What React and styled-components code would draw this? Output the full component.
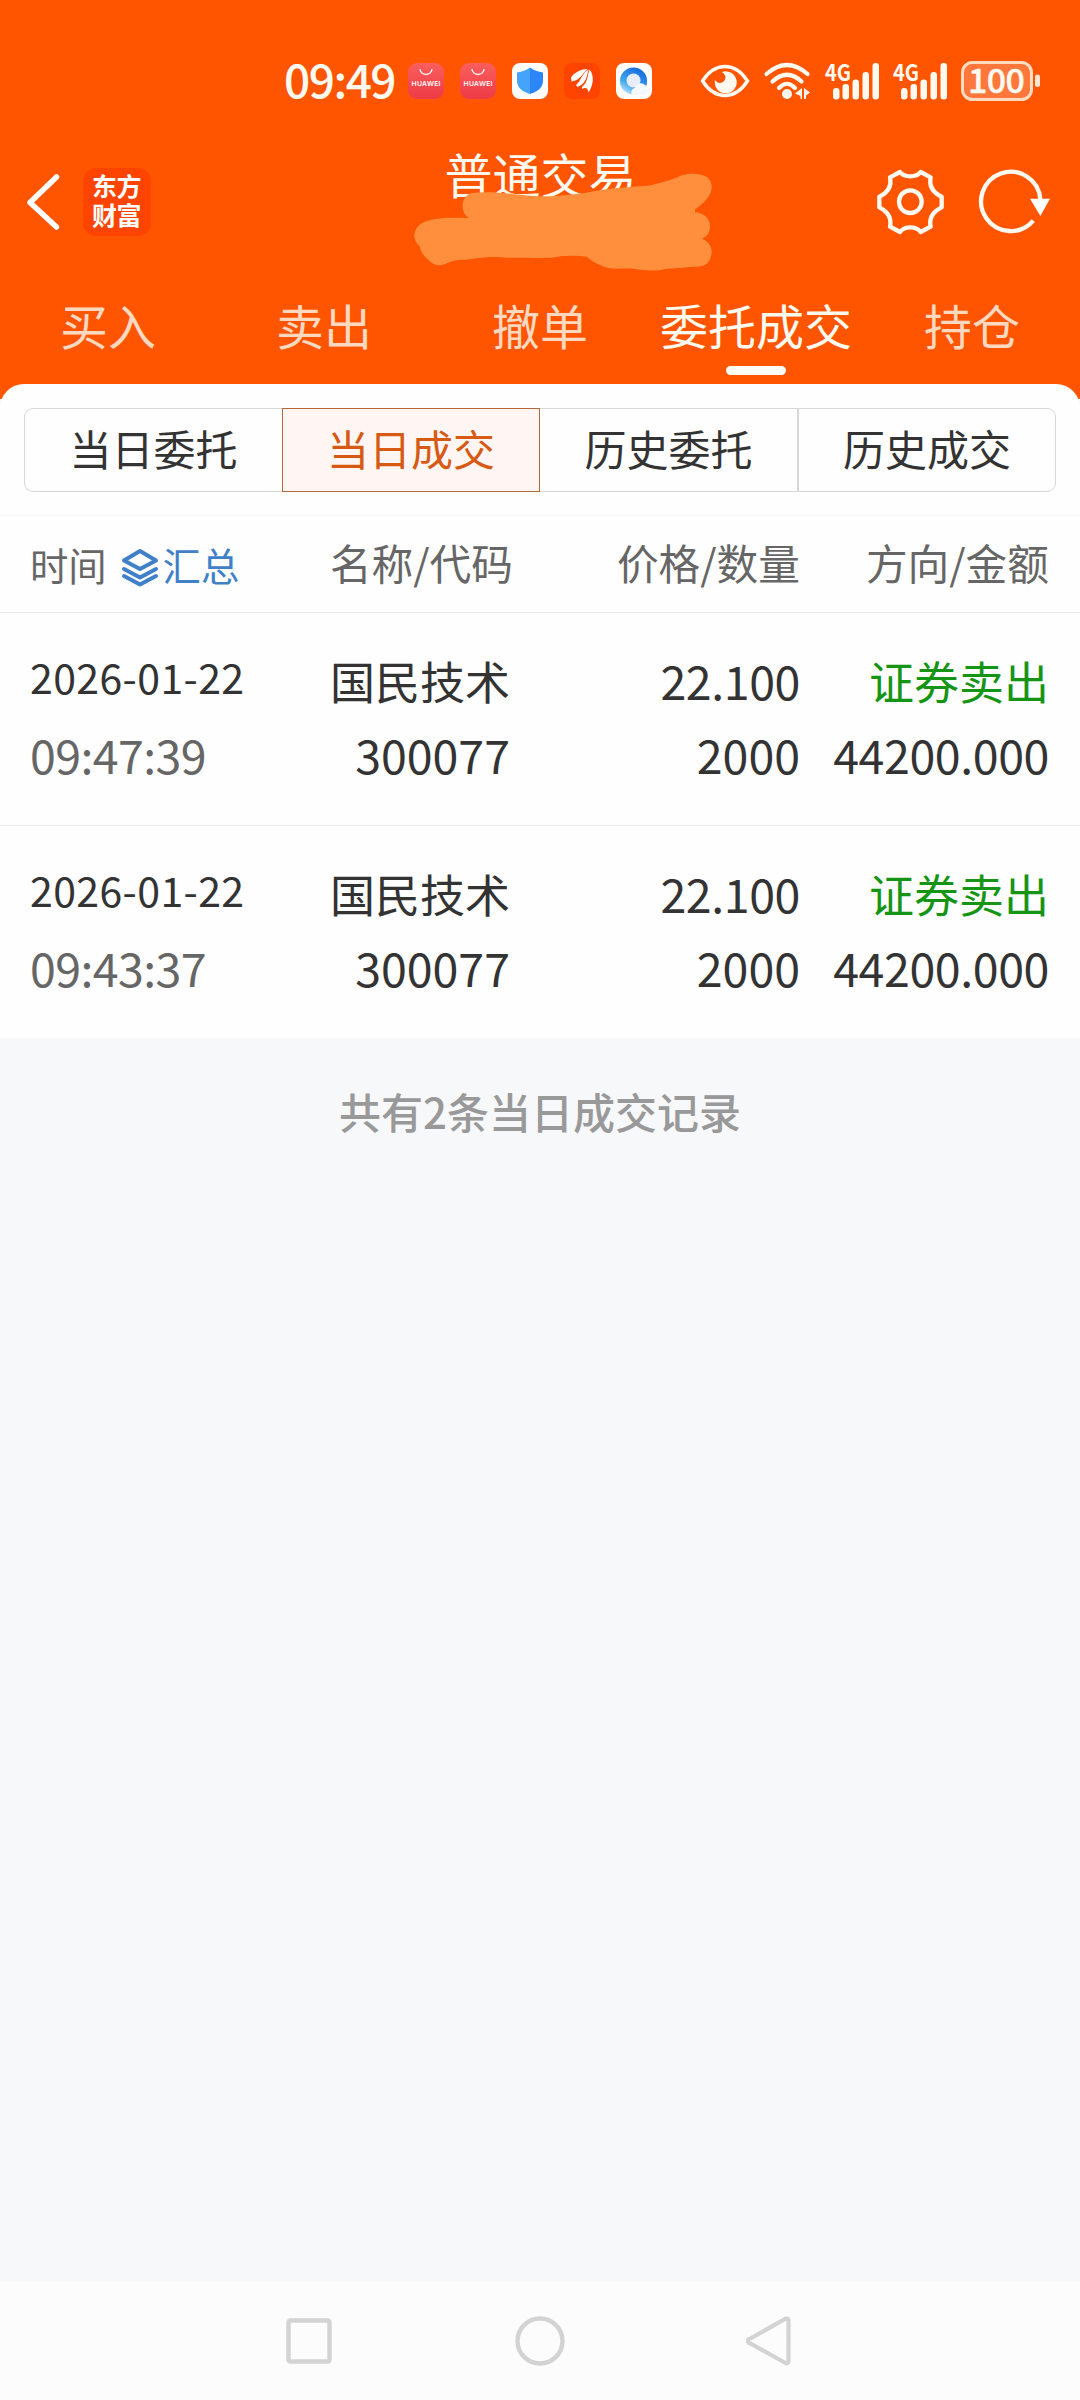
import styled, { createGlobalStyle } from 'styled-components'

const GlobalStyle = createGlobalStyle`
  * {
    box-sizing: border-box;
  }
  body {
    margin: 0;
    background: #f7f8fa;
    font-family: 'Noto Sans CJK SC', 'Noto Sans', sans-serif;
    color: #333;
  }
  svg {
    flex: none;
    overflow: visible;
  }
`

const Screen = styled.div`
  display: flex;
  flex-direction: column;
  width: 1080px;
  height: 2400px;
  overflow: hidden;
  white-space: nowrap;
`

const Header = styled.header`
  flex: none;
  height: 399px;
  background: #ff5500;
  color: #fff9ef;
`

const StatusBar = styled.div`
  display: flex;
  align-items: center;
  height: 162px;
  padding-left: 284px;
`

const Clock = styled.span`
  flex: none;
  width: 124px;
  font-size: 46px;
  font-weight: 500;
  line-height: 68px;
  letter-spacing: -1.5px;
  margin-top: -6px;
`

const Notices = styled.div`
  display: flex;
  gap: 16px;
  margin-right: 48px;
`

const Signals = styled.div`
  display: flex;
  align-items: center;
  gap: 14px;
`

const TitleBar = styled.div`
  position: relative;
  display: flex;
  align-items: center;
  height: 121px;
  margin-top: -21px;
  padding: 0 29px 0 26px;
`

const AppBadge = styled.div`
  width: 68px;
  height: 68px;
  margin-left: 23px;
  padding: 3px 0 0 9px;
  border-radius: 13px;
  background: #ff4400;
  color: #fff;
  font-size: 25px;
  font-weight: 700;
  line-height: 29px;
  letter-spacing: -0.5px;
`

const Title = styled.h1`
  flex: 1;
  margin: -58px 0 0;
  padding-left: 53px;
  text-align: center;
  font-size: 48px;
  font-weight: 400;
  line-height: 60px;
`

const Scribble = styled.svg`
  position: absolute;
  left: 410px;
  top: 29px;
`

const Actions = styled.div`
  display: flex;
  align-items: center;
  gap: 35px;
`

const Tabs = styled.nav`
  display: grid;
  grid-template-columns: repeat(5, 216px);
  padding-top: 30px;
`

const Tab = styled.div`
  display: flex;
  flex-direction: column;
  align-items: center;
  font-size: 48px;
  line-height: 64px;
  color: ${({ $active }) => ($active ? '#fffaf0' : '#ffd8c0')};

  &::after {
    content: '';
    width: 60px;
    height: 9px;
    margin-top: 10px;
    border-radius: 5px;
    background: ${({ $active }) => ($active ? '#fffdf8' : 'transparent')};
  }
`

const Card = styled.main`
  position: relative;
  flex: none;
  margin-top: -15px;
  border-radius: 24px 24px 0 0;
  background: #fefefe;
`

const Segments = styled.div`
  display: grid;
  grid-template-columns: repeat(4, 1fr);
  height: 132px;
  padding: 24px 24px 23px;
  border-bottom: 1px solid #f6f6f6;
`

const Segment = styled.div`
  border: 1px solid ${({ $active }) => ($active ? '#b5693a' : '#d6d8d8')};
  border-left-width: ${({ $joined }) => ($joined ? 0 : 1)}px;
  background: ${({ $active }) => ($active ? '#fff6f3' : 'transparent')};
  color: ${({ $active }) => ($active ? '#d65a14' : '#333')};
  text-align: center;
  font-size: 42px;
  line-height: 78px;

  &:first-child {
    border-right-width: 0;
    border-radius: 9px 0 0 9px;
  }
  &:last-child {
    border-radius: 0 9px 9px 0;
  }
`

const Columns = styled.div`
  display: grid;
  padding-left: 30px;
`

const HeadRow = styled(Columns)`
  grid-template-columns: 216px 267px 287px 249px;
  height: 97px;
  border-bottom: 1px solid #ebebeb;
  color: #666;
  font-size: 41.7px;
  line-height: 92px;
  text-align: right;
`

const HeadTime = styled.div`
  display: flex;
  align-items: center;
  font-size: 38.3px;
  line-height: 97px;
`

const Summary = styled.span`
  display: flex;
  align-items: center;
  margin-left: 15px;
  color: #4080c8;

  & svg {
    margin: 7px 5px 0 0;
  }
`

const Row = styled(Columns)`
  grid-template-columns: 216px 264px 290px 249px;
  height: 212px;
  padding-top: 30px;

  & + & {
    height: 213px;
    border-top: 1px solid #ebebeb;
  }
`

const Cell = styled.div`
  display: flex;
  flex-direction: column;
  align-items: ${({ $left }) => ($left ? 'flex-start' : 'flex-end')};
  font-size: 46.5px;
  line-height: 74px;
`

const DateText = styled.span`
  margin-bottom: 8px;
  font-size: 41px;
  line-height: 66px;
  letter-spacing: 0.4px;
`

const TimeText = styled.span`
  color: #666;
  letter-spacing: -0.6px;
`

const Name = styled.span`
  position: relative;
  top: 1px;
  font-size: 45px;
  color: ${({ $sell }) => ($sell ? '#159415' : 'inherit')};
`

const Decimal = styled.span`
  letter-spacing: -0.4px;
`

const Count = styled.p`
  flex: 1;
  margin: 0;
  padding-top: 42px;
  background: #f7f8fa;
  color: #999;
  text-align: center;
  font-size: 42px;
  font-weight: 500;
  line-height: 62px;
`

const NavBar = styled.footer`
  display: flex;
  justify-content: space-between;
  align-items: center;
  height: 118px;
  padding: 0 289px 0 285px;
  background: #fcfcfc;
`

const HuaweiIcon = () => (
  <svg width='36' height='36' viewBox='0 0 36 36'>
    <defs>
      <linearGradient id='store' x1='0' y1='0' x2='0' y2='1'>
        <stop offset='0' stopColor='#fb5f5c' />
        <stop offset='1' stopColor='#ee3a48' />
      </linearGradient>
    </defs>
    <rect width='36' height='36' rx='9' fill='url(#store)' />
    <path d='M12 6a6 5.5 0 0 0 12 0' fill='none' stroke='#fff' strokeWidth='1.3' />
    <text
      x='18'
      y='23'
      textAnchor='middle'
      textLength='29'
      fontFamily='Inter, sans-serif'
      fontSize='6.8'
      fontWeight='600'
      fill='#fff'
    >
      HUAWEI
    </text>
  </svg>
)

const ShieldIcon = () => (
  <svg width='36' height='36' viewBox='0 0 36 36'>
    <rect width='36' height='36' rx='8' fill='#fffefa' />
    <path d='M18 4.5c4 3 8 4 13 5v8c0 7-5 11-13 13.500z' fill='#2d86f7' />
    <path d='M18 4.5c-4 3-8 4-13 5v8c0 7 5 11 13 13.500z' fill='#46a3fb' />
  </svg>
)

const WingIcon = () => (
  <svg width='36' height='36' viewBox='0 0 36 36'>
    <rect width='36' height='36' rx='8' fill='#ff4400' />
    <g fill='#fff'>
      <path d='M7 14.500C11 9 17 6 23.500 6 19 9.500 17 17 7.500 18.500z' />
      <path d='M12 22C17 18 18 10 24.500 6.500 23 12 22.500 21 13.500 24z' />
      <path d='M18 24C24 19 23.500 12 25.500 6.500 31 13 29 23 24.500 29.500 24 25.500 22.500 24 18 26z' />
    </g>
  </svg>
)

const BrowserIcon = () => (
  <svg width='36' height='36' viewBox='0 0 36 36'>
    <defs>
      <linearGradient id='ring' x1='0.1' y1='1' x2='0.7' y2='0'>
        <stop offset='0' stopColor='#d8f1ff' />
        <stop offset='0.4' stopColor='#3fa6f0' />
        <stop offset='1' stopColor='#1568dc' />
      </linearGradient>
    </defs>
    <rect width='36' height='36' rx='8' fill='#fffefa' />
    <circle cx='17.5' cy='18' r='13.6' fill='url(#ring)' />
    <circle cx='17.5' cy='17.5' r='7' fill='#e6edf8' />
    <path d='M16 32a4.500 4.500 0 0 1 3-7 6 6 0 0 1 10-3c2 1 1 2 2 3 2 2 1 7-3 7z' fill='#f4f9ff' />
  </svg>
)

const EyeIcon = () => (
  <svg width='50' height='36' viewBox='0 0 50 36'>
    <path
      d='M2.500 18C9 8 17 3.500 25 3.500S41 8 47.500 18C41 28 33 32.500 25 32.500S9 28 2.500 18z'
      fill='none'
      stroke='#fff9ef'
      strokeWidth='3.4'
    />
    <path d='M22 9a11 11 0 1 1-7 8c2 3 5 4 8 2 4-3 3-7-1-10z' fill='#fff9ef' />
  </svg>
)

const WifiIcon = () => (
  <svg width='47' height='38' viewBox='0 0 47 38'>
    <g fill='none' stroke='#fff9ef' strokeWidth='4.2' strokeLinecap='round'>
      <path d='M2.500 12Q23-6 43.500 12' />
      <path d='M8.500 19.500Q23 6 37.500 19.500' />
      <path d='M15 26Q23 17.500 31 26' />
    </g>
    <circle cx='23' cy='32' r='5' fill='#fff9ef' />
    <path d='M38 26v11h-1.500v-3L31 31.500zM40 37V26l6 4.500-4 3v3.500z' fill='#fff9ef' />
  </svg>
)

const CellIcon = () => (
  <svg width='54' height='38' viewBox='0 0 54 38'>
    <text
      x='0'
      y='18.5'
      textLength='26'
      lengthAdjust='spacingAndGlyphs'
      fontFamily='Noto Sans CJK SC, sans-serif'
      fontSize='23'
      fontWeight='700'
      fill='#fff9ef'
    >
      4G
    </text>
    <g fill='#fff9ef'>
      <rect x='8' y='26' width='6.5' height='11.5' rx='3' />
      <rect x='17.5' y='22' width='6.5' height='15.5' rx='3' />
      <rect x='27.5' y='17.5' width='6.5' height='20' rx='3' />
      <rect x='37.5' y='10' width='6.5' height='27.5' rx='3' />
      <rect x='47.5' y='1' width='6.5' height='36.5' rx='3' />
    </g>
  </svg>
)

const BatteryIcon = () => (
  <svg width='79' height='40' viewBox='0 0 79 40'>
    <rect x='1.5' y='1.5' width='69' height='37' rx='10' fill='#ff773b' stroke='#ffdcc0' strokeWidth='3' />
    <rect x='74' y='13.5' width='5' height='12.5' rx='2.5' fill='#ffe6d0' />
    <text
      x='35.5'
      y='32'
      textAnchor='middle'
      textLength='57'
      fontFamily='Noto Sans CJK SC, sans-serif'
      fontSize='34'
      fontWeight='500'
      fill='#fff9ef'
      stroke='#fff9ef'
      strokeWidth='0.4'
    >
      100
    </text>
  </svg>
)

const BackIcon = () => (
  <svg width='34' height='58' viewBox='0 0 34 58'>
    <path d='M30.500 4L4 29.500 30.500 54' fill='none' stroke='#fff' strokeWidth='5.5' strokeLinecap='round' strokeLinejoin='round' />
  </svg>
)

const GearIcon = () => (
  <svg width='67' height='66' viewBox='411 87 201 198'>
    <g fill='none' stroke='#fff9ef' strokeWidth='13' strokeLinejoin='round'>
      <path d='M480 96Q490 109 511 109T542 96L572 112Q564 150 605 170V202Q564 222 572 260L542 276Q532 262 511 262T480 276L450 260Q458 222 418 202V170Q458 150 450 112z' />
      <circle cx='511' cy='185' r='34' />
    </g>
  </svg>
)

const RefreshIcon = () => (
  <svg width='72' height='66' viewBox='717 88 216 198'>
    <path d='M880 243A89 89 0 1 1 901 178' fill='none' stroke='#fff9ef' strokeWidth='13' />
    <path d='M870 177H930L901 229z' fill='#fff' />
  </svg>
)

const LayersIcon = () => (
  <svg width='36' height='38' viewBox='0 0 36 38' fill='none' stroke='#4080c8' strokeWidth='4' strokeLinejoin='round' strokeLinecap='round'>
    <path d='M18 2L34 11.500 18 20 2 11.500z' />
    <path d='M2 20L18 28.500 34 20M2 27L18 35.500 34 27' />
  </svg>
)

const tabs = ['买入', '卖出', '撤单', '委托成交', '持仓']
const segments = ['当日委托', '当日成交', '历史委托', '历史成交']
const deals = [
  { date: '2026-01-22', time: '09:47:39' },
  { date: '2026-01-22', time: '09:43:37' },
]

export default function App() {
  return (
    <Screen>
      <GlobalStyle />
      <Header>
        <StatusBar>
          <Clock>09:49</Clock>
          <Notices>
            <HuaweiIcon />
            <HuaweiIcon />
            <ShieldIcon />
            <WingIcon />
            <BrowserIcon />
          </Notices>
          <Signals>
            <EyeIcon />
            <WifiIcon />
            <CellIcon />
            <CellIcon />
            <BatteryIcon />
          </Signals>
        </StatusBar>

        <TitleBar>
          <BackIcon />
          <AppBadge>
            东方
            <br />
            财富
          </AppBadge>
          <Title>普通交易</Title>
          <Actions>
            <GearIcon />
            <RefreshIcon />
          </Actions>
          <Scribble width='306' height='106' viewBox='30 90 918 318'>
            <path
              d='M208 234C180 222 180 168 215 159C290 152 340 165 400 168C470 172 540 162 585 153C650 142 700 140 745 137C790 128 820 118 845 106C870 98 905 100 922 112C938 128 940 150 925 170C912 190 895 200 885 208V217C910 218 930 235 930 258C930 280 920 290 906 296C930 305 936 325 935 340C930 370 915 380 890 380C860 380 840 385 800 386C770 394 730 392 705 387C680 384 650 388 630 385C600 378 580 366 560 350C530 346 500 348 480 349C460 356 420 353 330 353C300 353 285 350 270 351C240 354 215 356 200 359C170 358 150 364 135 372C115 380 98 374 88 362C75 350 62 340 60 320C45 308 38 290 46 272C55 250 80 238 130 234C160 233 185 234 208 234z'
              fill='#ff8e3d'
            />
          </Scribble>
        </TitleBar>

        <Tabs>
          {tabs.map((tab) => (
            <Tab key={tab} $active={tab === '委托成交'}>
              {tab}
            </Tab>
          ))}
        </Tabs>
      </Header>

      <Card>
        <Segments>
          {segments.map((segment, i) => (
            <Segment key={segment} $active={i === 1} $joined={i === 2}>
              {segment}
            </Segment>
          ))}
        </Segments>

        <HeadRow>
          <HeadTime>
            时间
            <Summary>
              <LayersIcon />
              汇总
            </Summary>
          </HeadTime>
          <span>名称/代码</span>
          <span>价格/数量</span>
          <span>方向/金额</span>
        </HeadRow>

        {deals.map(({ date, time }) => (
          <Row key={time}>
            <Cell $left>
              <DateText>{date}</DateText>
              <TimeText>{time}</TimeText>
            </Cell>
            <Cell>
              <Name>国民技术</Name>
              <span>300077</span>
            </Cell>
            <Cell>
              <Decimal>22.100</Decimal>
              <span>2000</span>
            </Cell>
            <Cell>
              <Name $sell>证券卖出</Name>
              <Decimal>44200.000</Decimal>
            </Cell>
          </Row>
        ))}
      </Card>

      <Count>共有2条当日成交记录</Count>

      <NavBar>
        <svg width='48' height='50' viewBox='0 0 48 50'>
          <rect x='3.5' y='4.5' width='41' height='41' rx='2' fill='none' stroke='#d3d3d3' strokeWidth='4.5' />
        </svg>
        <svg width='50' height='50' viewBox='0 0 50 50'>
          <circle cx='25' cy='25' r='22.5' fill='none' stroke='#d3d3d3' strokeWidth='4.5' />
        </svg>
        <svg width='44' height='50' viewBox='0 0 44 50'>
          <path d='M39.500 2.500a2 2 0 0 1 2 2v41a2 2 0 0 1-3 1.500L3.500 27.500a2.500 2.500 0 0 1 0-5L38 3z' fill='none' stroke='#d3d3d3' strokeWidth='4.2' strokeLinejoin='round' />
        </svg>
      </NavBar>
    </Screen>
  )
}
